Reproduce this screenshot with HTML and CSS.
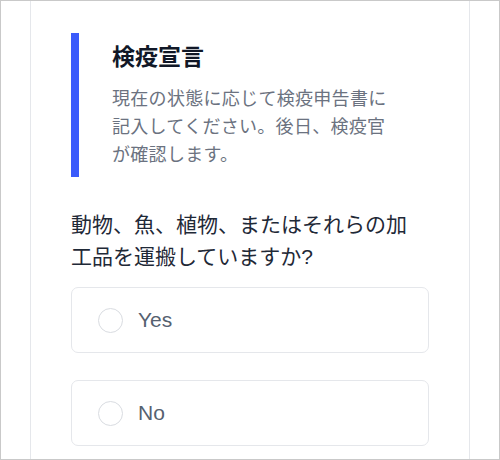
FILE: index.html
```html
<!DOCTYPE html>
<html lang="ja">
<head>
    <meta charset="UTF-8">
    <meta name="viewport" content="width=device-width, initial-scale=1.0">
    <title>検疫宣言</title>
    <link rel="stylesheet" href="styles.css">
</head>
<body>
    <div class="panel">
        <!-- 説明ブロック -->
        <div class="notice">
            <h1 class="notice-title">検疫宣言</h1>
            <p class="notice-text">現在の状態に応じて検疫申告書に記入してください。後日、検疫官が確認します。</p>
        </div>

        <!-- 質問 -->
        <p class="question">動物、魚、植物、またはそれらの加工品を運搬していますか?</p>

        <div class="options">
            <label class="option">
                <input type="radio" name="carry" value="yes">
                <span class="radio"></span>
                <span class="option-label">Yes</span>
            </label>

            <label class="option">
                <input type="radio" name="carry" value="no">
                <span class="radio"></span>
                <span class="option-label">No</span>
            </label>
        </div>
    </div>
</body>
</html>
```

FILE: styles.css
```css
* {
    box-sizing: border-box;
}

html {
    background-color: #fff;
}

body {
    margin: 0;
    width: 500px;
    height: 460px;
    border: 1px solid #c9c9c9;
    background-color: #fff;
    font-family: "Liberation Sans", "Noto Sans CJK JP", sans-serif;
    overflow: hidden;
}

.panel {
    margin-left: 29px;
    width: 440px;
    height: 100%;
    padding: 32px 40px 0 40px;
    border-left: 1px solid #e5e7eb;
    border-right: 1px solid #e5e7eb;
}

.notice {
    border-left: 8px solid #3b5bfb;
    padding: 8px 32px 8px 33px;
}

.notice-title {
    margin: 0;
    font-size: 23px;
    line-height: 32px;
    font-weight: 700;
    color: #111827;
}

.notice-text {
    margin: 12px 0 0 0;
    font-size: 18px;
    line-height: 28px;
    color: #6b7280;
    letter-spacing: 0.3px;
}

.question {
    margin: 32px 0 14px 0;
    padding-right: 8px;
    font-size: 21px;
    line-height: 32px;
    color: #1f2937;
}

.options {
    display: flex;
    flex-direction: column;
    gap: 27px;
}

.option {
    display: flex;
    align-items: center;
    gap: 15px;
    height: 66px;
    padding-left: 26px;
    border: 1px solid #e5e7eb;
    border-radius: 7px;
    cursor: pointer;
}

.option input {
    display: none;
}

.radio {
    width: 25px;
    height: 25px;
    border: 1px solid #d9dce1;
    border-radius: 50%;
}

.option-label {
    font-size: 21px;
    color: #566170;
}
```
